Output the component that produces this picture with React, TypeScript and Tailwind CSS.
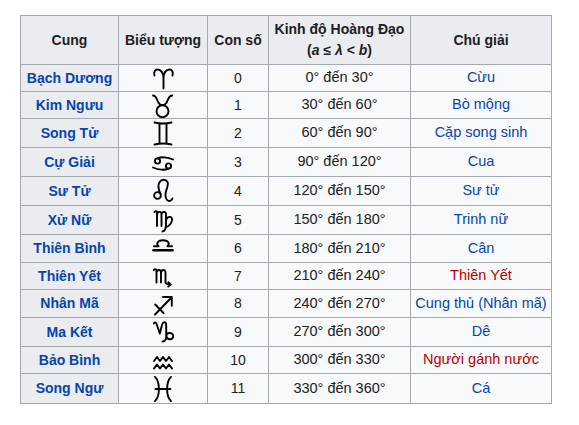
import React from 'react';

// zodiac glyphs, 24x26 box, stroked
const glyphs: Record<string, React.ReactNode> = {
  aries: (
    <path d="M3.5 10.5C2.5 7 4 4.5 6.5 4.5C10 4.5 12.5 8 12.5 13V23.5M12.5 13C12.5 8 15 4.5 18.5 4.5C21 4.5 22.5 7 21.5 10.5" />
  ),
  taurus: (
    <>
      <path d="M2 3.5C3.8 3.5 5 5 6 7.5C7 10.5 9 13.2 11.5 13.2C14 13.2 16 10.5 17 7.5C18 5 19.3 3.5 21.2 3.5" />
      <circle cx="11.5" cy="19.2" r="6" />
    </>
  ),
  gemini: (
    <path d="M3.5 2.5Q12 4.5 20.5 2.5M3.5 24.5Q12 22.5 20.5 24.5M8.5 3.6V23.4M15.5 3.6V23.4" />
  ),
  cancer: (
    <>
      <circle cx="6.5" cy="12" r="2.6" />
      <path d="M6.5 9.4C10 7.8 16.5 7.8 22 10.5" />
      <circle cx="17.5" cy="17" r="2.6" />
      <path d="M17.5 19.6C14 21.2 7.5 21.2 2 18.5" />
    </>
  ),
  leo: (
    <>
      <circle cx="6.5" cy="17.5" r="3.4" />
      <path d="M9.6 16C7.5 12 6.5 7.5 8.5 4.2C10.5 1 15 1 16.5 4C18 7 15.2 11 14.6 15C14 19 15.5 23 18 23C19.6 23 20.8 22 21.4 20.5" />
    </>
  ),
  virgo: (
    <path d="M3.5 5C4.5 4 5.6 3.8 6 5V19M6 7.5C6.5 4.2 10.5 3.8 10.5 7.5V19M10.5 7.5C11 4.2 15 3.8 15 7.5V18C15 21.5 14 24 11.5 24.5M15 13C16.5 9 21.5 8.8 21 13C20.6 17 17.5 19.2 14.5 20.5" />
  ),
  libra: (
    <>
      <path d="M3 10.2H7.6C5.4 8.6 5.6 4.2 12 4.2C18.4 4.2 18.6 8.6 16.4 10.2H21" />
      <path d="M2.5 14.3H21.5" strokeWidth="2.6" />
    </>
  ),
  scorpio: (
    <path d="M2.8 7.2C3.8 6 5 6 5.5 7.2V19.5M5.5 9.5C6 6.2 10 6 10 9.5V19.5M10 9.5C10.5 6.2 14.5 6 14.5 9.5V19C14.5 20.8 15.8 21.5 19.5 21.5M17.3 19.3L19.8 21.6L17.3 23.6" />
  ),
  sagittarius: (
    <path d="M4 23.5L20.5 6.5M12 6H20.8V14.8M4.2 13.5L12.5 22" />
  ),
  capricorn: (
    <path d="M2.8 4.5C3.8 3 5 3.2 5.6 5L8.8 14.5M8.8 14.5L11.2 5.2C12.2 2.4 15.2 2.6 15.2 6.2V17C15.2 20.5 14 22.6 11.5 22.5M15.2 17C15.4 13.2 22.2 12.8 22.2 17C22.2 21.2 16 21.4 15.2 17" />
  ),
  aquarius: (
    <path d="M3 14L6 10L9 14L12 10L15 14L18 10L21 14M3 21.5L6 17.5L9 21.5L12 17.5L15 21.5L18 17.5L21 21.5" />
  ),
  pisces: (
    <path d="M4 0.8C9.2 6 9.2 20 4 25.2M20 0.8C14.8 6 14.8 20 20 25.2M4.5 13H19.5" />
  ),
};

type Row = {
  name: string;
  glyph: string;
  num: number;
  range: string;
  note: string;
  red?: boolean;
  h: string;
};

const rows: Row[] = [
  { name: 'Bạch Dương', glyph: 'aries', num: 0, range: '0° đến 30°', note: 'Cừu', h: 'h-[27px]' },
  { name: 'Kim Ngưu', glyph: 'taurus', num: 1, range: '30° đến 60°', note: 'Bò mộng', h: 'h-[27px]' },
  { name: 'Song Tử', glyph: 'gemini', num: 2, range: '60° đến 90°', note: 'Cặp song sinh', h: 'h-[29px]' },
  { name: 'Cự Giải', glyph: 'cancer', num: 3, range: '90° đến 120°', note: 'Cua', h: 'h-[29px]' },
  { name: 'Sư Tử', glyph: 'leo', num: 4, range: '120° đến 150°', note: 'Sư tử', h: 'h-[29px]' },
  { name: 'Xử Nữ', glyph: 'virgo', num: 5, range: '150° đến 180°', note: 'Trinh nữ', h: 'h-[29px]' },
  { name: 'Thiên Bình', glyph: 'libra', num: 6, range: '180° đến 210°', note: 'Cân', h: 'h-[28px]' },
  { name: 'Thiên Yết', glyph: 'scorpio', num: 7, range: '210° đến 240°', note: 'Thiên Yết', red: true, h: 'h-[27px]' },
  { name: 'Nhân Mã', glyph: 'sagittarius', num: 8, range: '240° đến 270°', note: 'Cung thủ (Nhân mã)', h: 'h-[28px]' },
  { name: 'Ma Kết', glyph: 'capricorn', num: 9, range: '270° đến 300°', note: 'Dê', h: 'h-[29px]' },
  { name: 'Bảo Bình', glyph: 'aquarius', num: 10, range: '300° đến 330°', note: 'Người gánh nước', red: true, h: 'h-[27px]' },
  { name: 'Song Ngư', glyph: 'pisces', num: 11, range: '330° đến 360°', note: 'Cá', h: 'h-[30px]' },
];

function Glyph({ name }: { name: string }) {
  return (
    <svg
      viewBox="0 0 24 26"
      className="block mx-auto w-[24px] h-[26px]"
      fill="none"
      stroke="#000"
      strokeWidth="1.9"
      strokeLinecap="round"
      strokeLinejoin="round"
    >
      {glyphs[name]}
    </svg>
  );
}

export default function App() {
  const th = 'border border-[#a2a9b1] bg-[#eaecf0] font-bold text-center p-0';
  const td = 'border border-[#a2a9b1] bg-[#f8f9fa] text-center p-0';

  return (
    <div className="min-h-screen bg-white pt-[15px] pl-[20px] font-['Liberation_Sans',Arial,sans-serif] text-[14px] text-[#202122]">
      <table className="table-fixed border-collapse w-[531px]">
        <colgroup>
          <col className="w-[98px]" />
          <col className="w-[89px]" />
          <col className="w-[61px]" />
          <col className="w-[142px]" />
          <col className="w-[141px]" />
        </colgroup>
        <thead>
          <tr className="h-[49px]">
            <th className={th}>Cung</th>
            <th className={th}>Biểu tượng</th>
            <th className={th}>Con số</th>
            <th className={`${th} leading-[21px]`}>
              Kinh độ Hoàng Đạo
              <br />
              (<i>a</i> ≤ <i>λ</i> &lt; <i>b</i>)
            </th>
            <th className={th}>Chú giải</th>
          </tr>
        </thead>
        <tbody>
          {rows.map((r) => (
            <tr key={r.num} className={r.h}>
              <th className={`${th} text-[#0645ad]`}>{r.name}</th>
              <td className={td}>
                <Glyph name={r.glyph} />
              </td>
              <td className={td}>{r.num}</td>
              <td className={`${td} text-[14.5px]`}>{r.range}</td>
              <td className={`${td} text-[14.5px] ${r.red ? 'text-[#ba0000]' : 'text-[#0645ad]'}`}>{r.note}</td>
            </tr>
          ))}
        </tbody>
      </table>
    </div>
  );
}
